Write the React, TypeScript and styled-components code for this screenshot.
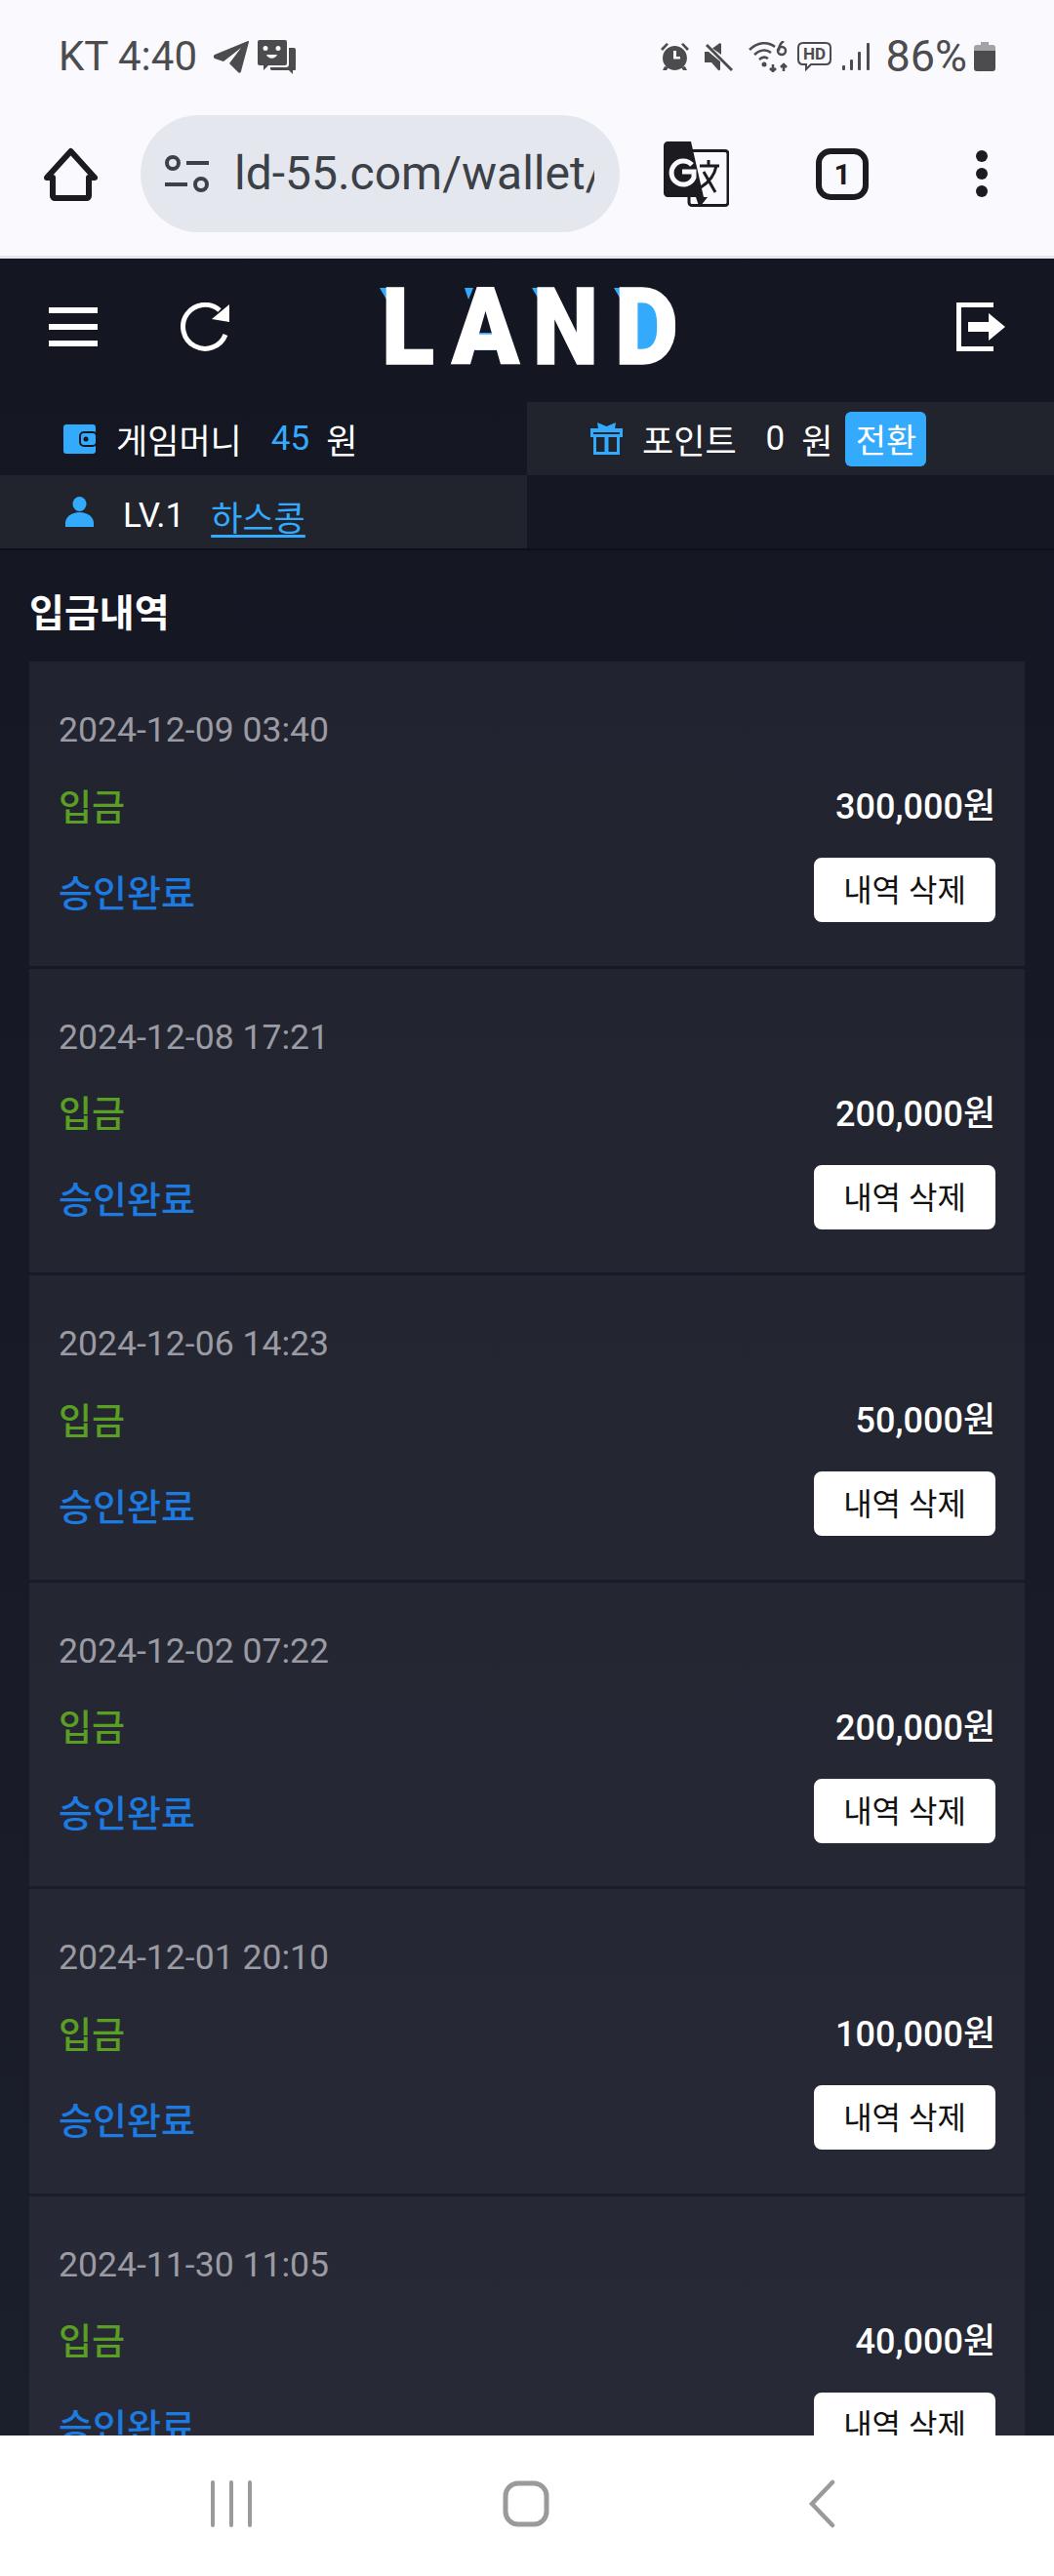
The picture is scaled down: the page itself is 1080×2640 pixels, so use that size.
import styled, { createGlobalStyle } from "styled-components";

const GlobalStyle = createGlobalStyle`
  html, body {
    margin: 0;
    padding: 0;
    background: #fff;
  }
  * {
    box-sizing: border-box;
  }
`;

const BLUE = "#33aafc";
const FONT = `Roboto, "Noto Sans CJK KR", sans-serif`;

const Phone = styled.div`
  display: flex;
  flex-direction: column;
  width: 1080px;
  height: 2640px;
  overflow: hidden;
  font-family: ${FONT};
  background: #f9f9fe;
`;

const StatusBar = styled.div`
  display: flex;
  flex: 0 0 100px;
  justify-content: space-between;
  align-items: center;
  padding: 16px 60px 0 60px;
  color: #4c4c4e;
`;

const StatusGroup = styled.div`
  display: flex;
  align-items: center;
`;

const StatusText = styled.span<{ $gap?: number; $size?: number }>`
  margin: 0 ${(props) => props.$gap ?? 0}px 0 0;
  font-size: ${(props) => props.$size ?? 42}px;
  line-height: 44px;
  white-space: nowrap;
`;

const StatusIcon = styled.svg<{ $gap?: number }>`
  display: block;
  flex: none;
  margin-right: ${(props) => props.$gap ?? 0}px;
  fill: #4c4c4e;
`;

const Toolbar = styled.div`
  display: flex;
  flex: 0 0 165px;
  align-items: center;
  padding: 0 0 6px 45px;
  background: #f9f9fe;
  border-bottom: 3px solid #e4e7ee;
`;

const AddressBar = styled.div`
  display: flex;
  align-items: center;
  width: 491px;
  height: 120px;
  margin: 0 45px 0 44px;
  padding: 0 0 0 25px;
  border-radius: 60px;
  background: #e4e7ee;
`;

const AddressText = styled.div`
  width: 369px;
  margin-left: 25px;
  overflow: hidden;
  font-size: 48px;
  line-height: 60px;
  color: #3c4047;
  white-space: nowrap;
`;

const TabCount = styled.div`
  display: flex;
  flex: none;
  justify-content: center;
  align-items: center;
  width: 54px;
  height: 53px;
  margin: 0 0 0 89px;
  border: 6px solid #1c1b20;
  border-radius: 15px;
  font-size: 30px;
  font-weight: 700;
  color: #1c1b20;
`;

const MenuDots = styled.div`
  display: flex;
  flex-direction: column;
  gap: 6px;
  margin-left: 110px;
`;

const Dot = styled.span`
  width: 12px;
  height: 12px;
  border-radius: 50%;
  background: #1c1b20;
`;

const Content = styled.div`
  flex: 1;
  min-height: 0;
  overflow: hidden;
  background: linear-gradient(#141722, #1b1e2b);
`;

const Header = styled.div`
  display: flex;
  align-items: center;
  height: 147px;
  padding: 0 50px 8px 50px;
`;

const HeaderLeft = styled.div`
  display: flex;
  flex: 1;
  align-items: center;
  gap: 85px;
`;

const HeaderRight = styled.div`
  display: flex;
  flex: 1;
  justify-content: flex-end;
`;

const InfoGrid = styled.div`
  display: grid;
  grid-template-columns: 540px 540px;
  grid-auto-rows: 75px;
  border-bottom: 2px solid #0e1018;
  color: #fff;
  font-size: 35px;
`;

const InfoCell = styled.div<{ $light?: boolean; $pad: number }>`
  display: flex;
  align-items: center;
  padding-left: ${(props) => props.$pad}px;
  background: ${(props) => (props.$light ? "#21242d" : "transparent")};
  white-space: nowrap;
`;

const InfoIcon = styled.svg<{ $gap: number }>`
  display: block;
  flex: none;
  margin-right: ${(props) => props.$gap}px;
  fill: ${BLUE};
`;

const InfoValue = styled.span<{ $gap: number; $blue?: boolean }>`
  margin-left: ${(props) => props.$gap}px;
  color: ${(props) => (props.$blue ? BLUE : "#fff")};
`;

const LevelText = styled.span`
  padding-top: 8px;
`;

const Nick = styled.a`
  margin-left: 27px;
  padding-top: 8px;
  color: ${BLUE};
  text-decoration: underline;
  text-underline-offset: 4px;
`;

const SwitchButton = styled.button`
  width: 83px;
  height: 56px;
  margin-left: 13px;
  padding: 0;
  border: 0;
  border-radius: 6px;
  background: ${BLUE};
  color: #fff;
  font-family: ${FONT};
  font-size: 34px;
`;

const Title = styled.h2`
  margin: 0;
  padding: 41px 0 0 30px;
  font-size: 39px;
  font-weight: 700;
  line-height: 48px;
  color: #fff;
`;

const List = styled.div`
  display: flex;
  flex-direction: column;
  gap: 3px;
  margin-top: 25px;
  padding: 0 30px;
`;

const Card = styled.div`
  flex: none;
  height: 311.5px;
  padding: 49px 30px 0 30px;
  background: rgba(255, 255, 255, 0.055);
`;

const DateText = styled.div`
  margin-bottom: 31px;
  font-size: 35.6px;
  line-height: 42px;
  color: #9b9ba3;
`;

const Row = styled.div<{ $height: number; $gap?: number }>`
  display: flex;
  justify-content: space-between;
  align-items: center;
  height: ${(props) => props.$height}px;
  margin-bottom: ${(props) => props.$gap ?? 0}px;
`;

const TypeText = styled.span`
  padding-bottom: 3px;
  font-size: 37px;
  font-weight: 500;
  color: #5a9e23;
`;

const Amount = styled.span`
  padding-bottom: 6px;
  font-size: 36px;
  font-weight: 500;
  color: #fff;
`;

const StateText = styled.span`
  font-size: 38px;
  font-weight: 500;
  color: #1c7ae0;
`;

const DeleteButton = styled.button`
  width: 186px;
  height: 66px;
  padding: 0 0 4px 0;
  border: 0;
  border-radius: 8px;
  background: #fff;
  color: #111;
  font-family: ${FONT};
  font-size: 32px;
`;

const NavBar = styled.div`
  display: flex;
  flex: 0 0 144px;
  align-items: center;
  padding: 0 0 4px 215px;
  background: #fff;
`;

const NavIcon = styled.svg<{ $left?: number }>`
  display: block;
  flex: none;
  margin-left: ${(props) => props.$left ?? 0}px;
  fill: none;
  stroke: #9a9a9a;
`;

const LogoSvg = styled.svg`
  display: block;
  flex: none;
  margin-top: -2px;
  font-family: Roboto, sans-serif;
  font-weight: 900;
  font-size: 110px;
`;

const deposits = [
  { date: "2024-12-09 03:40", amount: "300,000" },
  { date: "2024-12-08 17:21", amount: "200,000" },
  { date: "2024-12-06 14:23", amount: "50,000" },
  { date: "2024-12-02 07:22", amount: "200,000" },
  { date: "2024-12-01 20:10", amount: "100,000" },
  { date: "2024-11-30 11:05", amount: "40,000" },
];

const Logo = () => (
  <LogoSvg width="304" height="80" viewBox="388 296 304 80">
    <g fill={BLUE}>
      <polygon points="389,297 396,297 396,309" />
      <polygon points="476,297 485,297 480,309" />
      <polygon points="545,297 552,297 552,309" />
      <polygon points="629,297 636,297 636,309" />
      <polygon points="488,343 506,343 509,361 487,361" />
      <rect x="650" y="310" width="24" height="52" rx="5" />
    </g>
    <g fill="#fff" stroke="#fff" strokeWidth="1.500">
      <text x="391" y="375" textLength="54" lengthAdjust="spacingAndGlyphs">L</text>
      <text x="463" y="375" textLength="69" lengthAdjust="spacingAndGlyphs">A</text>
      <text x="546" y="375" textLength="67" lengthAdjust="spacingAndGlyphs">N</text>
      <text x="630" y="375" textLength="65" lengthAdjust="spacingAndGlyphs">D</text>
    </g>
  </LogoSvg>
);

const App = () => {
  return (
    <Phone>
      <GlobalStyle />
      <StatusBar>
        <StatusGroup>
          <StatusText $gap={17}>KT 4:40</StatusText>
          <StatusIcon $gap={9} width="36" height="33" viewBox="0 0 36 33">
            <path d="M35 0 L1 14 C-0.500 15 -0.500 17 1 18 L10 21 L28 7 L16 23 L25 32 C26 33 28 33 28 31 L36 1 C36 0 36 0 35 0 Z" />
          </StatusIcon>
          <StatusIcon width="39" height="35" viewBox="0 0 39 35">
            <path fillRule="evenodd" d="M2 0 H28 Q30 0 30 2 V24 Q30 26 28 26 H11 L6 31 V26 H2 Q0 26 0 24 V2 Q0 0 2 0 Z M8 6 A2.500 2.500 0 1 0 8 11 A2.500 2.500 0 1 0 8 6 Z M21 6 A2.500 2.500 0 1 0 21 11 A2.500 2.500 0 1 0 21 6 Z M9 15 C11 20 18 20 20 15 Z" />
            <path d="M32 8 H37 Q39 8 39 10 V30 Q39 31 38 31 H36 V35 L32 31 H15 Q13 31 13 30 V28 H29 Q32 28 32 25 Z" />
          </StatusIcon>
        </StatusGroup>
        <StatusGroup>
          <StatusIcon $gap={16} width="29" height="29" viewBox="0 0 29 29">
            <path d="M2 8 L8 1.500 L6 0 L0 6 Z M27 8 L21 1.500 L23 0 L29 6 Z" />
            <path fillRule="evenodd" d="M14.500 3 A12.500 12.500 0 1 1 14.400 3 Z M13 8 V16.500 H20 V14 H16 V8 Z" />
            <path d="M4 24 L2 28 H6 L8 25 Z M25 24 L27 28 H23 L21 25 Z" />
          </StatusIcon>
          <StatusIcon $gap={16} width="29" height="29" viewBox="0 0 29 29">
            <path d="M0 9 H4 L16 19 V27 C16 28 15 28.500 14 28 L7 20 H0 Z M8 5.500 L15 0.500 C16 0 17 0.500 17 1.500 V12 Z" />
            <path d="M1 3 L3 1 L29 27 L27 29 Z" />
          </StatusIcon>
          <StatusIcon $gap={7} width="43" height="32" viewBox="0 0 43 32">
            <g fill="none" stroke="#4c4c4e" strokeWidth="2.500">
              <path d="M1 9 C9 1 20 0 27 6" />
              <path d="M6 14 C11 9 18 8 23 12" />
              <path d="M11 19 C14 16 17 16 20 18" />
              <path d="M25 24 V31 M22 28 L25 31 L28 28" />
              <path d="M36 31 V24 M33 27 L36 24 L39 27" />
            </g>
            <circle cx="16" cy="24" r="2.500" />
            <circle cx="34" cy="10" r="4" fill="none" stroke="#4c4c4e" strokeWidth="2.500" />
            <path d="M31 10 C31 5 33 2 36 0" fill="none" stroke="#4c4c4e" strokeWidth="2.500" />
          </StatusIcon>
          <StatusIcon $gap={11} width="35" height="30" viewBox="0 0 35 30">
            <path fill="none" stroke="#4c4c4e" strokeWidth="2" d="M6 1 H29 C32 1 34 3 34 6 V18 C34 21 32 23 29 23 H14 L9 28 V23 H6 C3 23 1 21 1 18 V6 C1 3 3 1 6 1 Z" />
            <text x="17.500" y="18" textAnchor="middle" fontSize="17" fontWeight="700" fontFamily="Roboto, sans-serif">HD</text>
          </StatusIcon>
          <StatusIcon $gap={16} width="28" height="28" viewBox="0 0 28 28">
            <rect x="0" y="23" width="3" height="5" rx="1" />
            <rect x="8" y="17" width="3" height="11" rx="1" />
            <rect x="16" y="9" width="3" height="19" rx="1" />
            <rect x="25" y="0" width="3" height="28" rx="1" />
          </StatusIcon>
          <StatusText $gap={7} $size={45}>86%</StatusText>
          <StatusIcon width="22" height="30" viewBox="0 0 22 30">
            <path fill="#a3a3a5" d="M7 0 H15 V3 H19 C21 3 22 4 22 6 V9 H0 V6 C0 4 1 3 3 3 H7 Z" />
            <path d="M0 9 H22 V27 C22 29 21 30 19 30 H3 C1 30 0 29 0 27 Z" />
          </StatusIcon>
        </StatusGroup>
      </StatusBar>

      <Toolbar>
        <svg width="55" height="55" viewBox="0 0 55 55" fill="none" stroke="#1c1b20" strokeWidth="6" strokeLinejoin="round">
          <path d="M27.500 4 L52 31 H46 V50 C46 51 45 52 44 52 H11 C10 52 9 51 9 50 V31 H3 Z" />
        </svg>
        <AddressBar>
          <svg width="46" height="38" viewBox="0 0 46 38" fill="none" stroke="#3c4047" strokeWidth="4">
            <circle cx="8" cy="8" r="6" />
            <path d="M22 8 H45" />
            <path d="M0 30 H23" />
            <circle cx="37" cy="30" r="6" />
          </svg>
          <AddressText>ld-55.com/wallet/</AddressText>
        </AddressBar>
        <svg width="67" height="67" viewBox="0 0 67 67">
          <rect x="26" y="9.500" width="40" height="56" rx="3" fill="#f9f9fe" stroke="#1c1b20" strokeWidth="3" />
          <path fill="#1c1b20" d="M4 0 H28 L41 57 H4 C2 57 0 55 0 53 V4 C0 2 2 0 4 0 Z" />
          <path fill="#1c1b20" d="M33 57 H45 L38 66 H36 Z" />
          <path fill="none" stroke="#f9f9fe" strokeWidth="5" d="M29 24 A12 12 0 1 0 31 37 V31 H19" />
          <path fill="none" stroke="#1c1b20" strokeWidth="3" d="M37 25 H57 M46 19 V25 M54 25 C52 36 46 42 38 47 M41 31 L53 52" />
        </svg>
        <TabCount>1</TabCount>
        <MenuDots>
          <Dot />
          <Dot />
          <Dot />
        </MenuDots>
      </Toolbar>

      <Content>
        <Header>
          <HeaderLeft>
            <svg width="50" height="40" viewBox="0 0 50 40" fill="#fff">
              <rect x="0" y="0" width="50" height="6" />
              <rect x="0" y="17" width="50" height="6" />
              <rect x="0" y="34" width="50" height="6" />
            </svg>
            <svg width="50" height="50" viewBox="0 0 50 50">
              <path fill="none" stroke="#fff" strokeWidth="5" d="M46 33 A22.500 22.500 0 1 1 40 8" />
              <path fill="#fff" d="M50 2 V20 L32 17 Z" />
            </svg>
          </HeaderLeft>
          <Logo />
          <HeaderRight>
            <svg width="50" height="50" viewBox="0 0 50 50" fill="#fff">
              <path d="M0 0 H38 V5 H5 V45 H38 V50 H0 Z" />
              <path d="M12 20 H33 V11 L50 25 L33 39 V30 H12 Z" />
            </svg>
          </HeaderRight>
        </Header>

        <InfoGrid>
          <InfoCell $pad={65}>
            <InfoIcon $gap={19} width="35" height="30" viewBox="0 0 35 30">
              <rect x="0" y="0" width="33" height="30" rx="3" />
              <rect x="17" y="8" width="17" height="14" rx="4" stroke="#141722" strokeWidth="2" />
              <circle cx="23" cy="15" r="2.500" fill="#141722" />
            </InfoIcon>
            게임머니
            <InfoValue $gap={30} $blue>45</InfoValue>
            <InfoValue $gap={17}>원</InfoValue>
          </InfoCell>
          <InfoCell $light $pad={65}>
            <InfoIcon $gap={20} width="33" height="33" viewBox="0 0 33 33">
              <path d="M7 0 L16.500 4 L26 0 L25 6 H8 Z" />
              <path fillRule="evenodd" d="M0 6 H33 V15 H0 Z M3 10 V12 H30 V10 Z" />
              <path fillRule="evenodd" d="M3 15 H30 V33 H3 Z M6 15 V30 H14.500 V15 Z M18.500 15 V30 H27 V15 Z" />
            </InfoIcon>
            포인트
            <InfoValue $gap={30}>0</InfoValue>
            <InfoValue $gap={17}>원</InfoValue>
            <SwitchButton>전환</SwitchButton>
          </InfoCell>
          <InfoCell $light $pad={67}>
            <InfoIcon $gap={30} width="29" height="31" viewBox="0 0 29 31">
              <ellipse cx="14.500" cy="7.500" rx="7" ry="7.500" />
              <path d="M0 31 V27 C0 21 6 16 14.500 16 C23 16 29 21 29 27 V31 Z" />
            </InfoIcon>
            <LevelText>LV.1</LevelText>
            <Nick>하스콩</Nick>
          </InfoCell>
          <InfoCell $pad={0} />
        </InfoGrid>

        <Title>입금내역</Title>

        <List>
          {deposits.map((item) => (
            <Card key={item.date}>
              <DateText>{item.date}</DateText>
              <Row $height={52} $gap={27}>
                <TypeText>입금</TypeText>
                <Amount>{item.amount}원</Amount>
              </Row>
              <Row $height={66}>
                <StateText>승인완료</StateText>
                <DeleteButton>내역 삭제</DeleteButton>
              </Row>
            </Card>
          ))}
        </List>
      </Content>

      <NavBar>
        <NavIcon width="44" height="48" viewBox="0 0 44 48" strokeWidth="4" strokeLinecap="round">
          <path d="M3 2 V46 M22 2 V46 M41 2 V46" />
        </NavIcon>
        <NavIcon $left={256} width="48" height="48" viewBox="0 0 48 48" strokeWidth="5">
          <rect x="3" y="3" width="42" height="42" rx="13" />
        </NavIcon>
        <NavIcon $left={265} width="28" height="50" viewBox="0 0 28 50" strokeWidth="4.500" strokeLinecap="round">
          <path d="M25 3 L4 25 L25 47" />
        </NavIcon>
      </NavBar>
    </Phone>
  );
};

export default App;
